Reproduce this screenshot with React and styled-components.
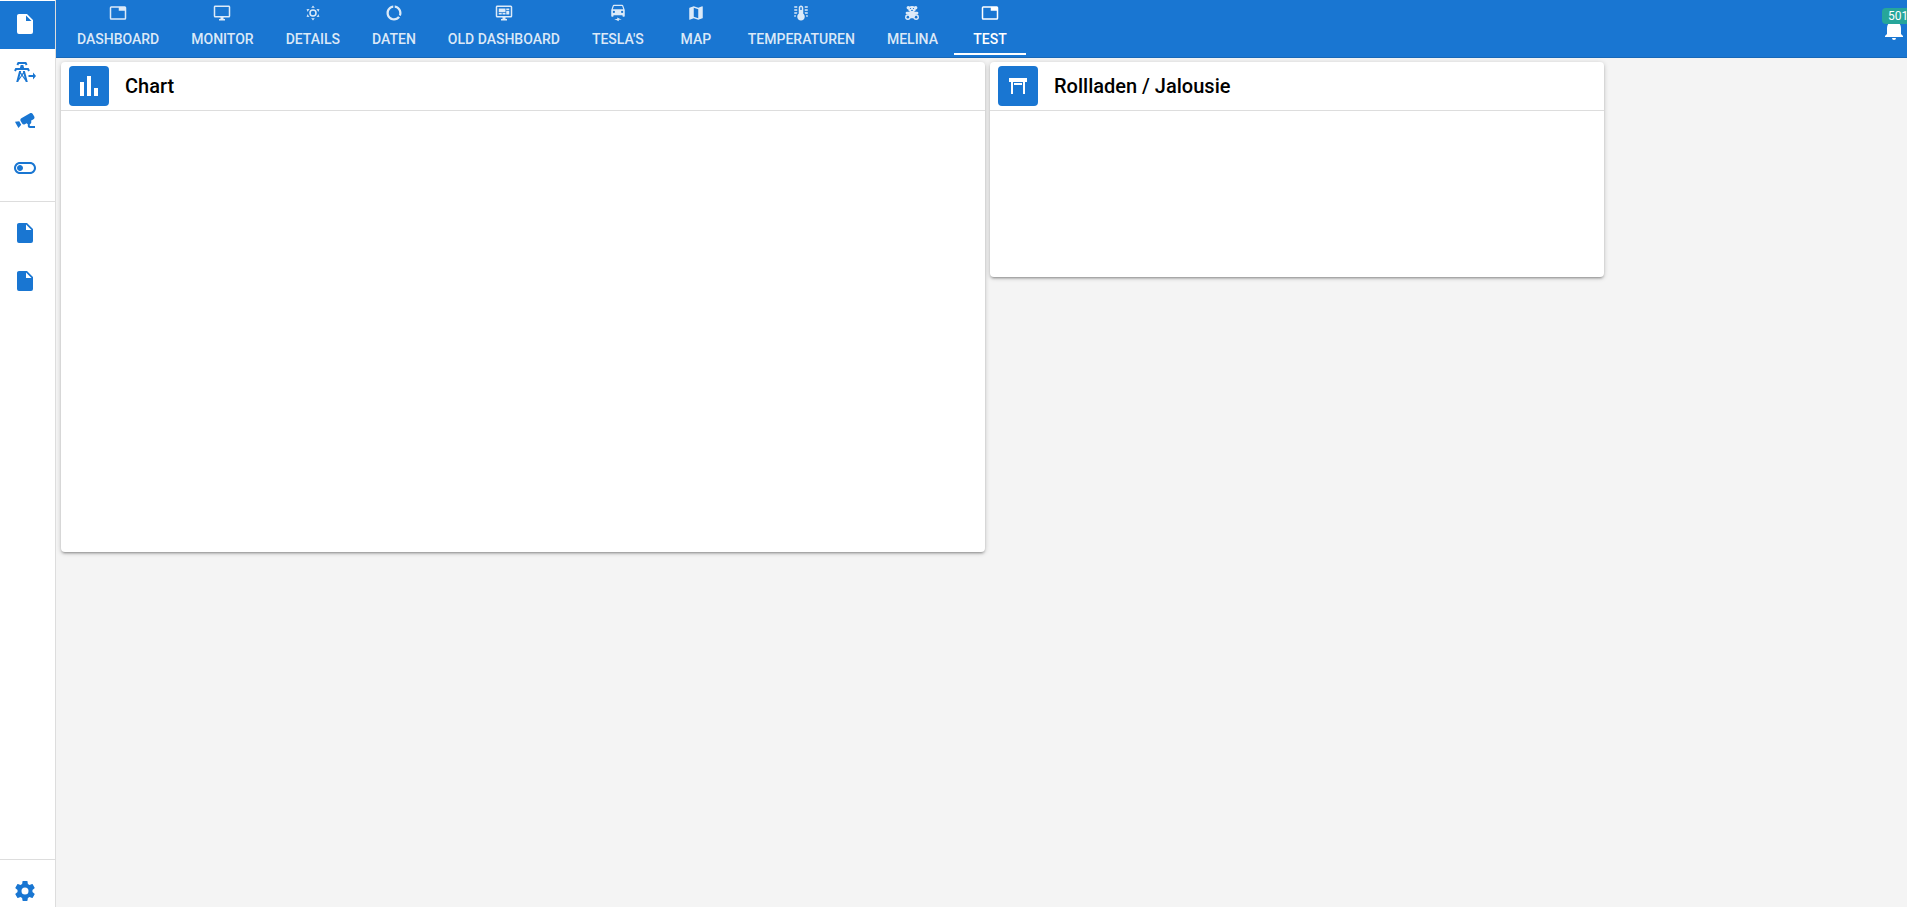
import React from "react";
import styled, { createGlobalStyle } from "styled-components";
import { MdDataUsage } from "react-icons/md";

const GlobalStyle = createGlobalStyle`
	*, *::before, *::after {
		box-sizing: border-box;
	}

	body {
		margin: 0;
		background: #f4f4f4;
		color: #000;
		font-family: Roboto, "Liberation Sans", sans-serif;
		font-size: 14px;
		overflow: hidden;
	}
`;

const Layout = styled.div`
	display: flex;
	height: 100vh;
	overflow: hidden;
`;

const Sidebar = styled.aside`
	display: flex;
	flex-direction: column;
	flex: none;
	width: 56px;
	background: #fff;
	border-right: 1px solid #ddd;
`;

const SideList = styled.nav`
	padding: ${({ $first }) => ($first ? "1px 0 8px" : "8px 0")};
	border-top: ${({ $first }) => ($first ? "none" : "1px solid #ddd")};
`;

const SideFooter = styled(SideList)`
	height: 48px;
	margin-top: auto;
	overflow: hidden;
`;

const SideButton = styled.button`
	display: block;
	width: 100%;
	height: 48px;
	padding: 11px 13px 13px;
	border: none;
	background: ${({ $active }) => ($active ? "#1976d2" : "transparent")};
	color: ${({ $active }) => ($active ? "#fff" : "#1976d2")};
	cursor: pointer;
`;

const Icon = styled.svg`
	display: block;
	flex: none;
	width: ${({ $size }) => $size || 24}px;
	height: ${({ $size }) => $size || 24}px;
	fill: currentColor;
`;

const Main = styled.div`
	flex: 1;
	min-width: 0;
`;

const Header = styled.header`
	display: flex;
	justify-content: space-between;
	height: 58px;
	padding-left: 5px;
	background: #1976d2;
	border-bottom: 1px solid #1868b7;
	color: #fff;
`;

const Tabs = styled.div`
	display: flex;
	height: 55px;
`;

const Tab = styled.button`
	display: flex;
	flex-direction: column;
	align-items: center;
	gap: 5px;
	min-width: 72px;
	padding: 4px 16px 0;
	border: none;
	border-bottom: 2px solid ${({ $active }) => ($active ? "#fff" : "transparent")};
	background: none;
	color: ${({ $active }) => ($active ? "#fff" : "rgba(255, 255, 255, 0.85)")};
	font: 500 14px/24px Roboto, "Liberation Sans", sans-serif;
	text-transform: uppercase;
	white-space: nowrap;
	cursor: pointer;
`;

const BellButton = styled.button`
	display: flex;
	align-items: flex-start;
	position: relative;
	width: 25px;
	padding: 17px 0 0;
	border: none;
	background: none;
	color: #fff;
	cursor: pointer;
`;

const Badge = styled.span`
	position: absolute;
	top: 8px;
	left: 0;
	padding: 2px 6px;
	border-radius: 4px;
	background: #26a69a;
	font: 400 12px/12px Roboto, "Liberation Sans", sans-serif;
`;

const Cards = styled.main`
	display: grid;
	grid-template-columns: calc(50% + 1px) calc(100% / 3 - 1px);
	align-items: start;
	gap: 5px;
	padding: 4px 0 0 5px;
`;

const Card = styled.section`
	min-height: ${({ $height }) => $height}px;
	border-radius: 4px;
	background: #fff;
	box-shadow: 0 1px 5px rgba(0, 0, 0, 0.2), 0 2px 2px rgba(0, 0, 0, 0.14),
		0 3px 1px -2px rgba(0, 0, 0, 0.12);
`;

const CardHeader = styled.div`
	display: flex;
	align-items: center;
	gap: 16px;
	padding: 4px 8px;
	border-bottom: 1px solid #ddd;
`;

const Avatar = styled.div`
	display: flex;
	align-items: center;
	justify-content: center;
	width: 40px;
	height: 40px;
	border-radius: 4px;
	background: #1976d2;
	color: #fff;
`;

const CardTitle = styled.h2`
	margin: 0;
	font-size: 20px;
	font-weight: 500;
	line-height: 32px;
`;

const paths = {
  file:
    "M13,9V3.5L18.5,9M6,2C4.89,2 4,2.89 4,4V20A2,2 0 0,0 6,22H18A2,2 0 0,0 20,20V8L14,2H6Z",
  tower:
    "M5.28,5.45L3.5,4.55L4.76,2H13.23L14.5,4.55L12.72,5.44L12,4H6L5.28,5.45M15.62,8H11.09L10.3,5H7.7L6.91,8H2.38L1.1,10.55L2.89,11.44L3.62,10H14.38L15.1,11.45L16.89,10.56L15.62,8M14.77,22H12.7L12.46,21.1L9,15.9L5.53,21.1L5.3,22H3.23L6.12,11H8.19L7.83,12.35L9,14.1L10.16,12.35L9.81,11H11.88L14.77,22M8.4,15L7.5,13.65L6.32,18.13L8.4,15M11.68,18.12L10.5,13.64L9.6,15L11.68,18.12M23,16L20,12.5V15H15.500V17H20V19.5L23,16Z",
  cctv:
    "M18.15,4.94C17.77,4.91 17.37,5 17,5.2L8.35,10.2C7.39,10.76 7.07,12 7.62,12.94L9.12,15.53C9.67,16.5 10.89,16.82 11.85,16.27L13.65,15.23C13.92,15.69 14.32,16.06 14.81,16.27V18.04C14.81,19.13 15.7,20 16.81,20H22V18.04H16.81V16.27C17.72,15.87 18.31,14.97 18.31,14C18.31,13.54 18.19,13.11 17.97,12.73L20.5,11.27C21.47,10.71 21.8,9.5 21.24,8.53L19.74,5.94C19.4,5.34 18.79,5 18.15,4.94M6.22,13.17L2,13.87L2.75,15.17L4.75,18.63L5.5,19.93L8.22,16.63L6.22,13.17Z",
  toggle:
    "M17 6H7c-3.31 0-6 2.69-6 6s2.69 6 6 6h10c3.31 0 6-2.69 6-6s-2.69-6-6-6zm0 10H7c-2.21 0-4-1.79-4-4s1.79-4 4-4h10c2.21 0 4 1.79 4 4s-1.79 4-4 4zM7 9c-1.66 0-3 1.34-3 3s1.34 3 3 3 3-1.34 3-3-1.34-3-3-3z",
  cog:
    "M12,15.5A3.5,3.5 0 0,1 8.5,12A3.5,3.5 0 0,1 12,8.5A3.5,3.5 0 0,1 15.5,12A3.5,3.5 0 0,1 12,15.5M19.43,12.97C19.47,12.65 19.5,12.33 19.5,12C19.5,11.67 19.47,11.34 19.43,11L21.54,9.37C21.73,9.22 21.78,8.95 21.66,8.73L19.66,5.27C19.54,5.05 19.27,4.96 19.05,5.05L16.56,6.05C16.04,5.66 15.5,5.32 14.87,5.07L14.5,2.42C14.46,2.18 14.25,2 14,2H10C9.75,2 9.54,2.18 9.5,2.42L9.13,5.07C8.5,5.32 7.96,5.66 7.44,6.05L4.95,5.05C4.73,4.96 4.46,5.05 4.34,5.27L2.34,8.73C2.21,8.95 2.27,9.22 2.46,9.37L4.57,11C4.53,11.34 4.5,11.67 4.5,12C4.5,12.33 4.53,12.65 4.57,12.97L2.46,14.63C2.27,14.78 2.21,15.05 2.34,15.27L4.34,18.73C4.46,18.95 4.73,19.03 4.95,18.95L7.44,17.94C7.96,18.34 8.5,18.68 9.13,18.93L9.5,21.58C9.54,21.82 9.75,22 10,22H14C14.25,22 14.46,21.82 14.5,21.58L14.87,18.93C15.5,18.67 16.04,18.34 16.56,17.94L19.05,18.95C19.27,19.03 19.54,18.95 19.66,18.73L21.66,15.27C21.78,15.05 21.73,14.78 21.54,14.63L19.43,12.97Z",
  tab:
    "M21,3H3A2,2 0 0,0 1,5V19A2,2 0 0,0 3,21H21A2,2 0 0,0 23,19V5A2,2 0 0,0 21,3M21,19H3V5H13V9H21V19Z",
  monitor:
    "M21,16H3V4H21M21,2H3C1.89,2 1,2.89 1,4V16A2,2 0 0,0 3,18H10V20H8V22H16V20H14V18H21A2,2 0 0,0 23,16V4C23,2.89 22.1,2 21,2Z",
  sunny:
    "M12,7A5,5 0 0,1 17,12A5,5 0 0,1 12,17A5,5 0 0,1 7,12A5,5 0 0,1 12,7M12,9A3,3 0 0,0 9,12A3,3 0 0,0 12,15A3,3 0 0,0 15,12A3,3 0 0,0 12,9M12,2L14.39,5.42C13.65,5.15 12.84,5 12,5C11.16,5 10.35,5.15 9.61,5.42L12,2M3.34,7L7.5,6.65C6.9,7.16 6.36,7.78 5.94,8.5C5.5,9.24 5.25,10 5.11,10.79L3.34,7M3.36,17L5.12,13.23C5.26,14 5.53,14.78 5.95,15.5C6.37,16.24 6.91,16.86 7.5,17.37L3.36,17M20.65,7L18.88,10.79C18.74,10 18.47,9.23 18.05,8.5C17.63,7.78 17.1,7.15 16.5,6.64L20.65,7M20.64,17L16.5,17.36C17.09,16.85 17.62,16.22 18.04,15.5C18.46,14.77 18.73,14 18.87,13.21L20.64,17M12,22L9.59,18.56C10.33,18.83 11.14,19 12,19C12.82,19 13.63,18.83 14.37,18.56L12,22Z",
  monitorDashboard:
    "M21,16V4H3V16H21M21,2A2,2 0 0,1 23,4V16A2,2 0 0,1 21,18H14V20H16V22H8V20H10V18H3C1.89,18 1,17.1 1,16V4C1,2.89 1.89,2 3,2H21M5,6H14V11H5V6M15,6H19V8H15V6M19,9V14H15V9H19M5,12H9V14H5V12M10,12H14V14H10V12Z",
  car:
    "M18.92,2C18.72,1.42 18.16,1 17.5,1H6.5C5.84,1 5.29,1.42 5.08,2L3,8V16A1,1 0 0,0 4,17H5A1,1 0 0,0 6,16V15H18V16A1,1 0 0,0 19,17H20A1,1 0 0,0 21,16V8L18.92,2M6.5,12A1.5,1.5 0 0,1 5,10.5A1.5,1.5 0 0,1 6.5,9A1.5,1.5 0 0,1 8,10.5A1.5,1.5 0 0,1 6.5,12M17.5,12A1.5,1.5 0 0,1 16,10.5A1.5,1.5 0 0,1 17.5,9A1.5,1.5 0 0,1 19,10.5A1.5,1.5 0 0,1 17.5,12M5,7L6.5,2.5H17.5L19,7H5M7,20H11V18L17,21H13V23L7,20Z",
  map:
    "M15,19L9,16.89V5L15,7.11M20.5,3C20.44,3 20.39,3 20.34,3L15,5.1L9,3L3.36,4.9C3.15,4.97 3,5.15 3,5.38V20.5A0.5,0.5 0 0,0 3.5,21C3.55,21 3.61,21 3.66,20.97L9,18.9L15,21L20.64,19.1C20.85,19 21,18.85 21,18.62V3.5A0.5,0.5 0 0,0 20.5,3Z",
  thermometer:
    "M17 3H21V5H17V3M17 7H21V9H17V7M17 11H21V13H17.75L17 12.1V11M21 15V17H19C19 16.31 18.9 15.63 18.71 15H21M17 17C17 19.76 14.76 22 12 22S7 19.76 7 17C7 15.36 7.79 13.91 9 13V5C9 3.34 10.34 2 12 2S15 3.34 15 5V13C16.21 13.91 17 15.36 17 17M11 8H13V5C13 4.45 12.55 4 12 4S11 4.45 11 5V8M7 3H3V5H7V3M7 7H3V9H7V7M7 11H3V13H6.25L7 12.1V11M3 15V17H5C5 16.31 5.1 15.63 5.29 15H3Z",
  chart: "M3 8H7V22H3ZM10 2H14V22H10ZM17 14H21V22H17Z",
  shutter: "M3 4H21V8H19V20H17V8H7V20H5V8H3V4M8 9H16V11H8V9Z",
  bell:
    "M21,19V20H3V19L5,17V11C5,7.9 7.03,5.17 10,4.29C10,4.19 10,4.1 10,4A2,2 0 0,1 12,2A2,2 0 0,1 14,4C14,4.1 14,4.19 14,4.29C16.97,5.17 19,7.9 19,11V17L21,19M14,21A2,2 0 0,1 12,23A2,2 0 0,1 10,21"
};

const tabs = [
  { label: "Dashboard", icon: "tab" },
  { label: "Monitor", icon: "monitor" },
  { label: "Details", icon: "sunny" },
  { label: "Daten", icon: "usage" },
  { label: "Old Dashboard", icon: "monitorDashboard" },
  { label: "Tesla's", icon: "car" },
  { label: "Map", icon: "map" },
  { label: "Temperaturen", icon: "thermometer" },
  { label: "Melina", icon: "teddy" },
  { label: "Test", icon: "tab", active: true }
];

// the mask keeps overlapping parts at one opacity and cuts out eyes and paws
const TeddyIcon = ({ size }) => (
  <Icon viewBox="0 0 24 24" $size={size} aria-hidden="true">
    <mask id="teddy">
      <g fill="#fff">
        <circle cx="7" cy="5" r="2.200" />
        <circle cx="17" cy="5" r="2.200" />
        <ellipse cx="12" cy="6.800" rx="5" ry="4.200" />
        <rect x="3.500" y="10.300" width="17" height="3.600" rx="1.800" />
        <ellipse cx="12" cy="14.500" rx="5" ry="4.500" />
        <circle cx="6.500" cy="17.500" r="3.700" />
        <circle cx="17.500" cy="17.500" r="3.700" />
      </g>
      <g fill="#000">
        <circle cx="10" cy="6" r="0.800" />
        <circle cx="14" cy="6" r="0.800" />
        <ellipse cx="12" cy="8.500" rx="1.200" ry="0.800" />
        <circle cx="6.500" cy="17.500" r="1.700" />
        <circle cx="17.500" cy="17.500" r="1.700" />
      </g>
    </mask>
    <rect width="24" height="24" mask="url(#teddy)" />
  </Icon>
);

const Glyph = ({ name, size }) => {
  if (name === "teddy") return <TeddyIcon size={size} />;
  if (name === "usage") return <Icon as={MdDataUsage} $size={size} aria-hidden="true" />;
  return (
    <Icon viewBox="0 0 24 24" $size={size} aria-hidden="true">
      <path fillRule="evenodd" d={paths[name]} />
    </Icon>
  );
};

const SideItem = ({ icon, label, active }) => (
  <SideButton $active={active} aria-label={label}>
    <Glyph name={icon} />
  </SideButton>
);

const Widget = ({ icon, title, height }) => (
  <Card $height={height}>
    <CardHeader>
      <Avatar>
        <Glyph name={icon} />
      </Avatar>
      <CardTitle>{title}</CardTitle>
    </CardHeader>
  </Card>
);

const App = () => {
  return (
    <Layout>
      <GlobalStyle />
      <Sidebar>
        <SideList $first>
          <SideItem icon="file" label="Page" active />
          <SideItem icon="tower" label="Energy" />
          <SideItem icon="cctv" label="Cameras" />
          <SideItem icon="toggle" label="Switches" />
        </SideList>
        <SideList>
          <SideItem icon="file" label="Page 2" />
          <SideItem icon="file" label="Page 3" />
        </SideList>
        <SideFooter>
          <SideItem icon="cog" label="Settings" />
        </SideFooter>
      </Sidebar>
      <Main>
        <Header>
          <Tabs role="tablist">
            {tabs.map(({ label, icon, active }) => (
              <Tab key={label} role="tab" aria-selected={!!active} $active={active}>
                <Glyph name={icon} size={18} />
                {label}
              </Tab>
            ))}
          </Tabs>
          <BellButton aria-label="Notifications">
            <Glyph name="bell" />
            <Badge>501</Badge>
          </BellButton>
        </Header>
        <Cards>
          <Widget icon="chart" title="Chart" height={490} />
          <Widget icon="shutter" title="Rollladen / Jalousie" height={215} />
        </Cards>
      </Main>
    </Layout>
  );
};

export default App;
